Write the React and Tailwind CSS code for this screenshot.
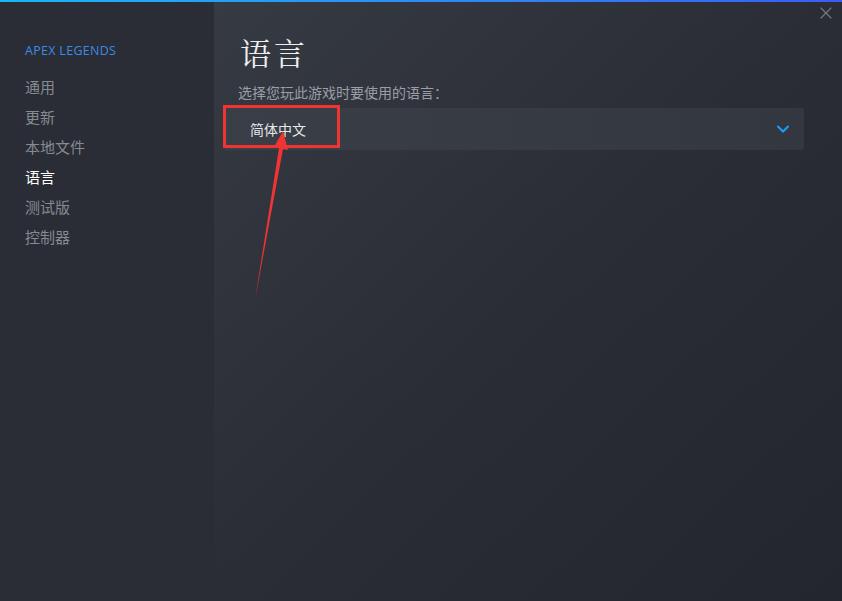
import { FiChevronDown, FiX } from 'react-icons/fi';

const menu = ['通用', '更新', '本地文件', '语言', '测试版', '控制器'];

const App = () => {
  return (
    <div
      className="relative w-[842px] h-[601px] overflow-hidden flex flex-col bg-[#23262e]"
      style={{ fontFamily: '"Noto Sans CJK SC", "Noto Sans", sans-serif' }}
    >
      <div className="h-[2px] shrink-0 bg-gradient-to-r from-[#19b6f5] to-[#3a5cf5]" />
      <div className="flex flex-1">
        <aside className="w-[214px] shrink-0 bg-[#2a2d35] pl-[25px] pt-[41px]">
          <p className="text-[12.5px] text-[#3d8ae5] tracking-[0.3px] leading-[16px]" style={{ fontFamily: '"Open Sans", sans-serif' }}>
            APEX LEGENDS
          </p>
          <ul className="mt-[13px]">
            {menu.map(item => (
              <li
                key={item}
                className={`text-[15px] leading-[30px] ${item === '语言' ? 'text-white' : 'text-[#868a91]'}`}
              >
                {item}
              </li>
            ))}
          </ul>
        </aside>
        <main className="relative flex-1 bg-gradient-to-br from-[#363a43] via-[#2a2d35] to-[#23262e] pl-[10px] pr-[38px] pt-[28px]">
          <button className="absolute top-[1px] right-[6px] text-[#767c83]">
            <FiX size={20} strokeWidth={1.3} />
          </button>
          <h1
            className="pl-[16px] text-[31px] leading-[44px] text-[#eceef0] tracking-[3px]"
            style={{ fontFamily: '"Noto Serif CJK SC", "Noto Sans CJK SC", serif' }}
          >
            语言
          </h1>
          <p className="pl-[14px] mt-[8px] text-[14px] leading-[20px] text-[#9a9ea6]">
            选择您玩此游戏时要使用的语言：
          </p>
          <div className="mt-[6px] h-[42px] rounded-[3px] bg-gradient-to-r from-[#3a3e47] to-[#333740] flex items-center justify-between pl-[26px] pr-[11px]">
            <span className="text-[14px] text-[#e6e8ea]">简体中文</span>
            <FiChevronDown size={20} className="text-[#1a9fff]" strokeWidth={2.5} />
          </div>
        </main>
      </div>

      {/* annotation overlay */}
      <div className="absolute left-[223px] top-[105px] w-[117px] h-[43px] border-[3px] border-[#f03434]" />
      <svg className="absolute left-0 top-0" width="842" height="601">
        <polygon points="255,300 279,148 274,147 283,131 288,150 283,149" fill="#f03434" />
      </svg>
    </div>
  );
};

export default App;
